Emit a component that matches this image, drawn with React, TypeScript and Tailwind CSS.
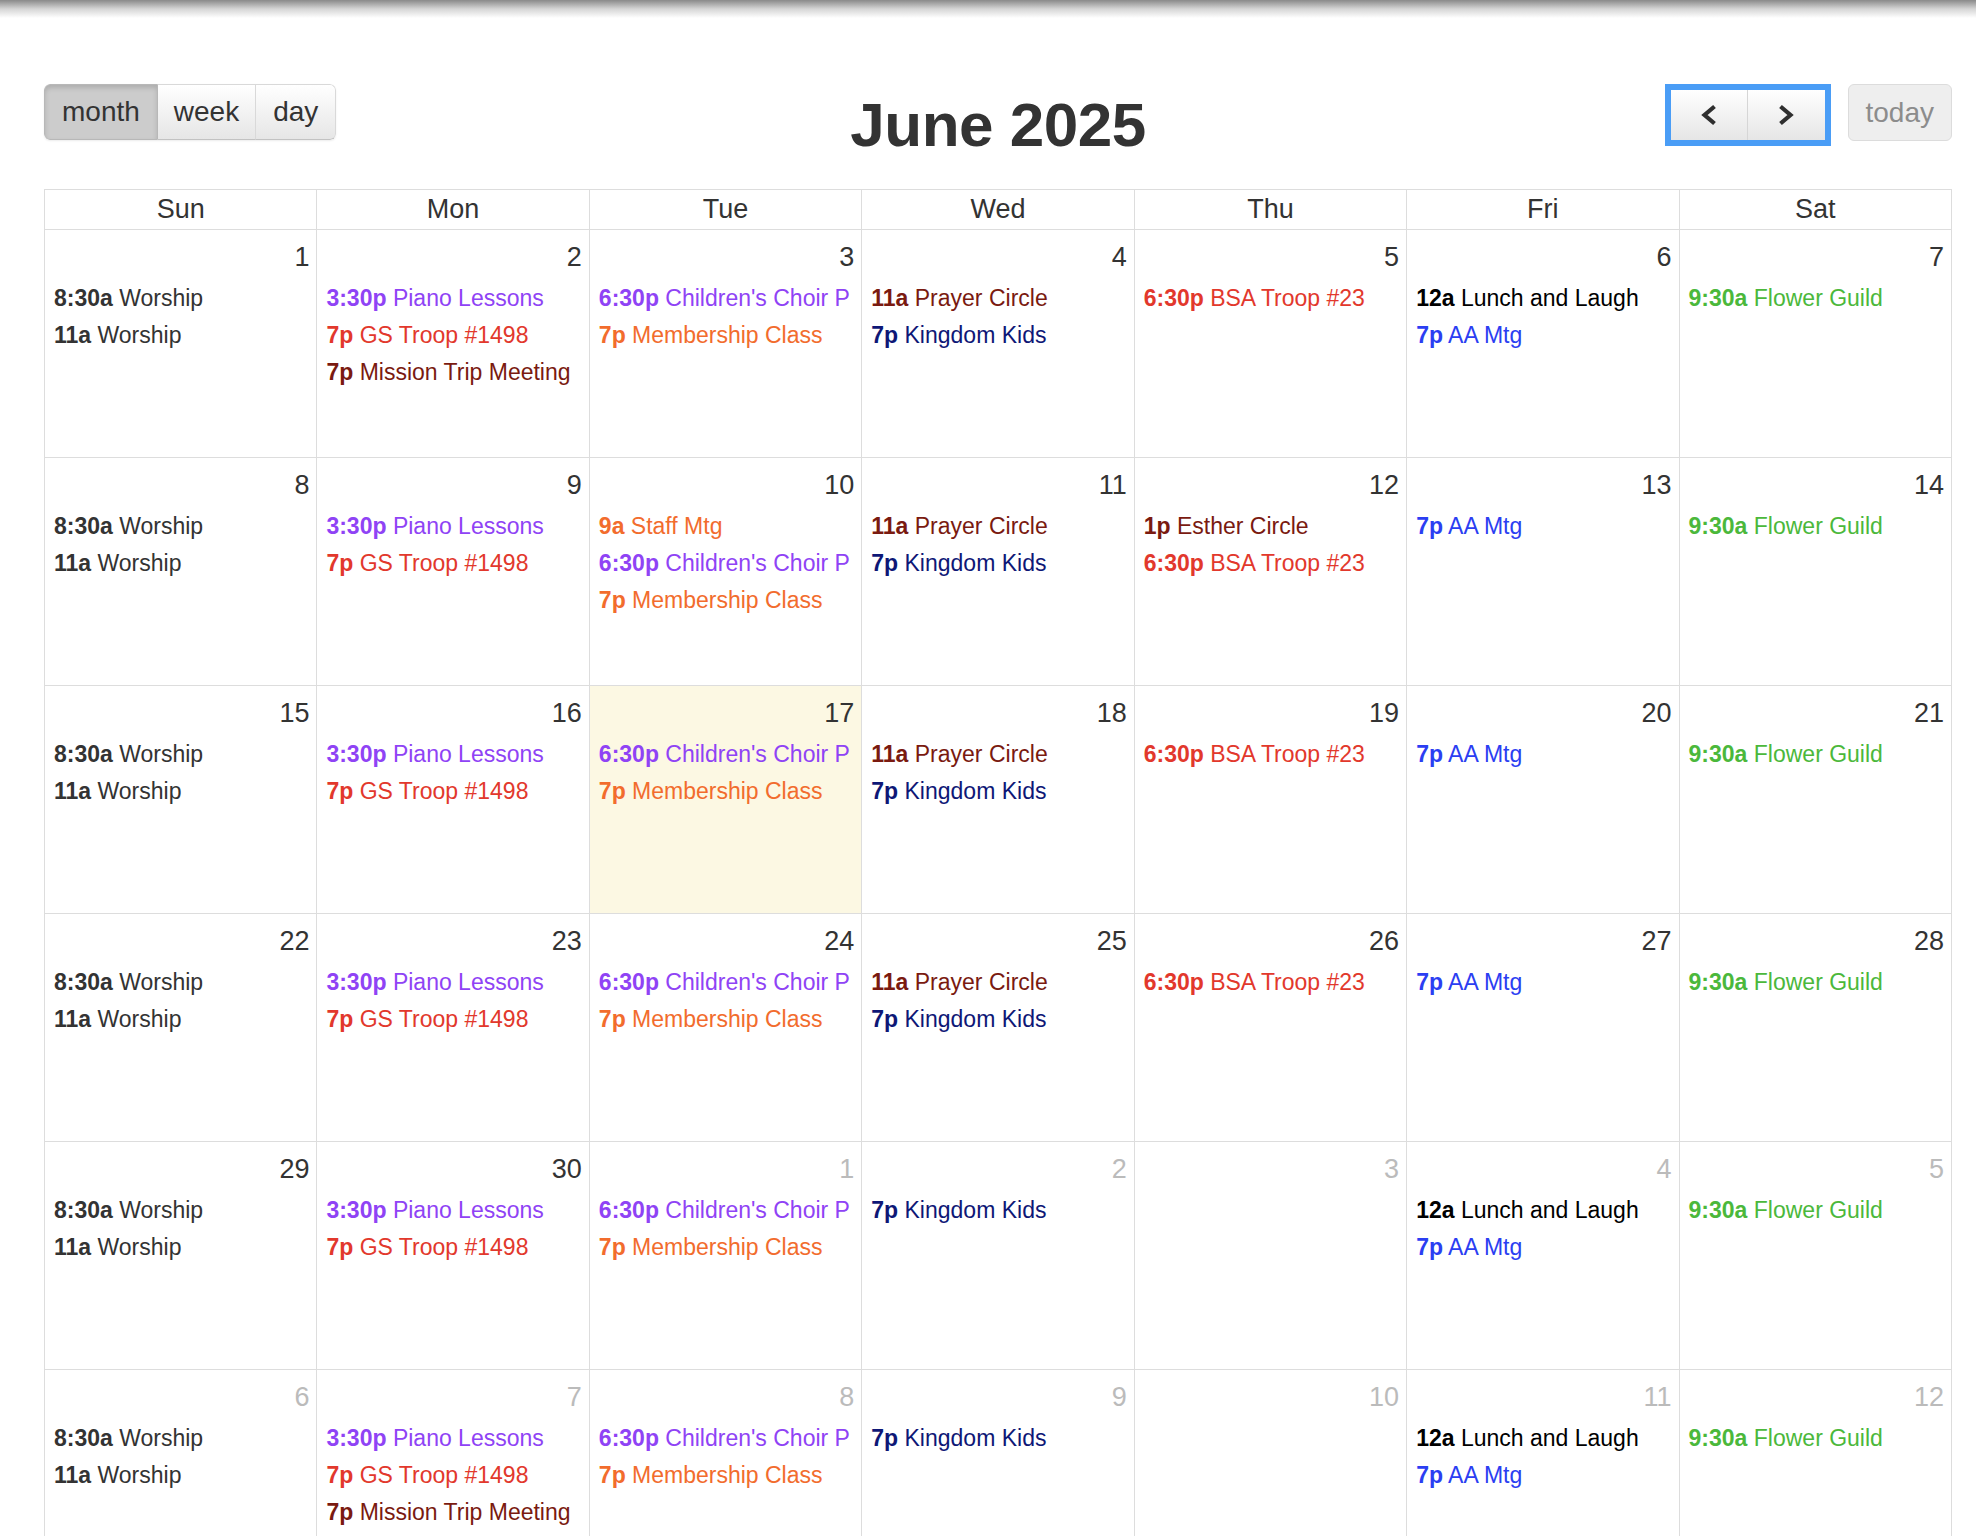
import React from 'react';

type Ev = { t: string; n: string; c: string };
type Cell = { d: number; other?: boolean; today?: boolean; ev: Ev[] };

const DEF = 'text-[#333333]';
const PURPLE = 'text-[#8f43f5]';
const RED = 'text-[#e2382c]';
const DRED = 'text-[#7a1a10]';
const ORANGE = 'text-[#f26c2d]';
const NAVY = 'text-[#0e1776]';
const BLACK = 'text-black';
const BLUE = 'text-[#2b3ef2]';
const GREEN = 'text-[#4bb83b]';

const worship: Ev[] = [
  { t: '8:30a', n: 'Worship', c: DEF },
  { t: '11a', n: 'Worship', c: DEF },
];
const piano: Ev = { t: '3:30p', n: 'Piano Lessons', c: PURPLE };
const gs: Ev = { t: '7p', n: 'GS Troop #1498', c: RED };
const mission: Ev = { t: '7p', n: 'Mission Trip Meeting', c: DRED };
const choir: Ev = { t: '6:30p', n: "Children's Choir P", c: PURPLE };
const membership: Ev = { t: '7p', n: 'Membership Class', c: ORANGE };
const prayer: Ev = { t: '11a', n: 'Prayer Circle', c: DRED };
const kingdom: Ev = { t: '7p', n: 'Kingdom Kids', c: NAVY };
const bsa: Ev = { t: '6:30p', n: 'BSA Troop #23', c: RED };
const lunch: Ev = { t: '12a', n: 'Lunch and Laugh', c: BLACK };
const aa: Ev = { t: '7p', n: 'AA Mtg', c: BLUE };
const flower: Ev = { t: '9:30a', n: 'Flower Guild', c: GREEN };
const staff: Ev = { t: '9a', n: 'Staff Mtg', c: ORANGE };
const esther: Ev = { t: '1p', n: 'Esther Circle', c: DRED };

const weeks: Cell[][] = [
  [
    { d: 1, ev: worship },
    { d: 2, ev: [piano, gs, mission] },
    { d: 3, ev: [choir, membership] },
    { d: 4, ev: [prayer, kingdom] },
    { d: 5, ev: [bsa] },
    { d: 6, ev: [lunch, aa] },
    { d: 7, ev: [flower] },
  ],
  [
    { d: 8, ev: worship },
    { d: 9, ev: [piano, gs] },
    { d: 10, ev: [staff, choir, membership] },
    { d: 11, ev: [prayer, kingdom] },
    { d: 12, ev: [esther, bsa] },
    { d: 13, ev: [aa] },
    { d: 14, ev: [flower] },
  ],
  [
    { d: 15, ev: worship },
    { d: 16, ev: [piano, gs] },
    { d: 17, today: true, ev: [choir, membership] },
    { d: 18, ev: [prayer, kingdom] },
    { d: 19, ev: [bsa] },
    { d: 20, ev: [aa] },
    { d: 21, ev: [flower] },
  ],
  [
    { d: 22, ev: worship },
    { d: 23, ev: [piano, gs] },
    { d: 24, ev: [choir, membership] },
    { d: 25, ev: [prayer, kingdom] },
    { d: 26, ev: [bsa] },
    { d: 27, ev: [aa] },
    { d: 28, ev: [flower] },
  ],
  [
    { d: 29, ev: worship },
    { d: 30, ev: [piano, gs] },
    { d: 1, other: true, ev: [choir, membership] },
    { d: 2, other: true, ev: [kingdom] },
    { d: 3, other: true, ev: [] },
    { d: 4, other: true, ev: [lunch, aa] },
    { d: 5, other: true, ev: [flower] },
  ],
  [
    { d: 6, other: true, ev: worship },
    { d: 7, other: true, ev: [piano, gs, mission] },
    { d: 8, other: true, ev: [choir, membership] },
    { d: 9, other: true, ev: [kingdom] },
    { d: 10, other: true, ev: [] },
    { d: 11, other: true, ev: [lunch, aa] },
    { d: 12, other: true, ev: [flower] },
  ],
];

const dayNames = ['Sun', 'Mon', 'Tue', 'Wed', 'Thu', 'Fri', 'Sat'];

function Chevron({ dir }: { dir: 'left' | 'right' }) {
  return (
    <svg width="18" height="22" viewBox="0 0 18 22" fill="none">
      {dir === 'left' ? (
        <polyline points="14.5,2.5 4.5,11 14.5,19.5" stroke="#2f2f2f" strokeWidth="4.2" strokeLinejoin="miter" strokeLinecap="butt" />
      ) : (
        <polyline points="3.5,2.5 13.5,11 3.5,19.5" stroke="#2f2f2f" strokeWidth="4.2" strokeLinejoin="miter" strokeLinecap="butt" />
      )}
    </svg>
  );
}

export default function App() {
  return (
    <div className="min-h-screen w-full bg-white font-['Liberation_Sans',Arial,Helvetica,sans-serif] text-[#333333]">
      <div className="h-[18px] w-full bg-linear-to-b from-[#8a8a8a] via-[#d6d6d6] to-white" />
      <div className="pl-[44px] pr-[24px]">
        {/* toolbar */}
        <div className="mt-[66px] flex h-[105px] items-start">
          <div className="flex flex-1 items-start">
            <div className="flex h-[56px] overflow-hidden rounded-[6px] text-[28px] text-[#333333] shadow-[0_1px_2px_rgba(0,0,0,0.08)]">
              <div className="flex h-full items-center rounded-l-[6px] border border-[#b8b8b8] bg-[#cccccc] px-[17px] shadow-[inset_0_3px_5px_rgba(0,0,0,0.15)]">
                month
              </div>
              <div className="flex h-full items-center border-y border-r border-[#d9d9d9] border-b-[#c2c2c2] bg-linear-to-b from-white to-[#e6e6e6] px-[16px]">
                week
              </div>
              <div className="flex h-full items-center rounded-r-[6px] border-y border-r border-[#d9d9d9] border-b-[#c2c2c2] bg-linear-to-b from-white to-[#e6e6e6] px-[17px]">
                day
              </div>
            </div>
          </div>
          <h2 className="mt-[10px] text-[62px] font-bold leading-[62px] tracking-[-0.5px] text-[#333333]">
            June 2025
          </h2>
          <div className="flex flex-1 items-start justify-end gap-[17px]">
            <div className="flex h-[62px] w-[166px] border-[6px] border-[#4a9df6] bg-white">
              <div className="flex flex-1 items-center justify-center border-r border-[#d6d6d6] bg-linear-to-b from-white to-[#e6e6e6]">
                <Chevron dir="left" />
              </div>
              <div className="flex flex-1 items-center justify-center bg-linear-to-b from-white to-[#e6e6e6]">
                <Chevron dir="right" />
              </div>
            </div>
            <div className="flex h-[57px] items-center rounded-[6px] border border-[#dcdcdc] bg-[#eeeeee] px-[17px] text-[28px] text-[#8c8c8c]">
              today
            </div>
          </div>
        </div>

        {/* grid */}
        <div className="border-l border-t border-[#dddddd]">
          <div className="grid grid-cols-7">
            {dayNames.map((d) => (
              <div
                key={d}
                className="flex h-[40px] items-center justify-center border-b border-r border-[#dddddd] text-[27px] leading-none text-[#333333]"
              >
                {d}
              </div>
            ))}
          </div>
          {weeks.map((week, wi) => (
            <div key={wi} className="grid grid-cols-7">
              {week.map((cell, ci) => (
                <div
                  key={ci}
                  className={`h-[228px] min-w-0 overflow-hidden border-b border-r border-[#dddddd] ${
                    cell.today ? 'bg-[#fcf8e3]' : 'bg-white'
                  }`}
                >
                  <div
                    className={`pr-[7px] pt-[11px] text-right text-[27px] leading-[32px] ${
                      cell.other ? 'text-[#bbbbbb]' : 'text-[#333333]'
                    }`}
                  >
                    {cell.d}
                  </div>
                  <div className="mt-[7px] pl-[9px] pr-[4px]">
                    {cell.ev.map((e, ei) => (
                      <div
                        key={ei}
                        className={`whitespace-nowrap text-[23px] leading-[37px] ${e.c}`}
                      >
                        <span className="font-bold">{e.t}</span> {e.n}
                      </div>
                    ))}
                  </div>
                </div>
              ))}
            </div>
          ))}
        </div>
      </div>
    </div>
  );
}
